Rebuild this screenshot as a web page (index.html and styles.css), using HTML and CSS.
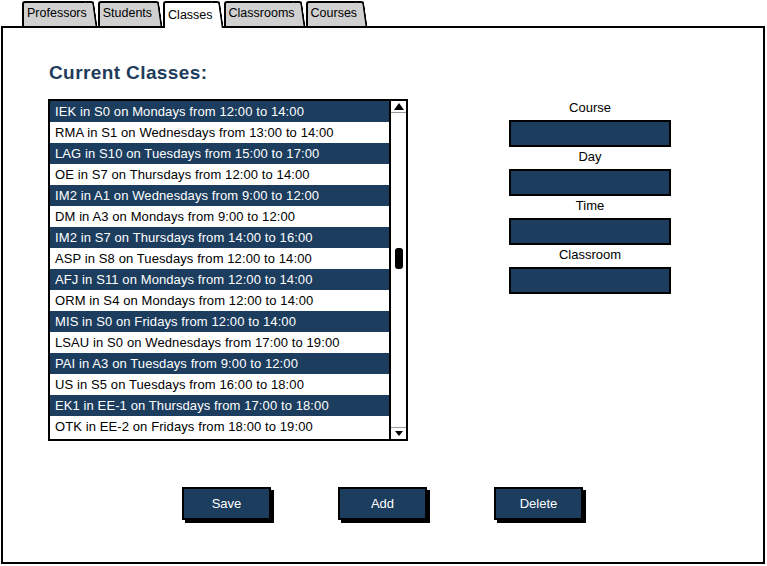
FILE: index.html
```html
<!DOCTYPE html>
<html>
<head>
<meta charset="utf-8">
<link rel="stylesheet" href="styles.css">
</head>
<body>
<div class="tabs">
  <div class="tab">Professors</div>
  <div class="tab">Students</div>
  <div class="tab active">Classes</div>
  <div class="tab">Classrooms</div>
  <div class="tab">Courses</div>
</div>
<div class="panel">
  <h1 class="title">Current Classes:</h1>
  <div class="main">
    <div class="list">
      <ul class="rows">
        <li class="row dark">IEK in S0 on Mondays from 12:00 to 14:00</li>
        <li class="row">RMA in S1 on Wednesdays from 13:00 to 14:00</li>
        <li class="row dark">LAG in S10 on Tuesdays from 15:00 to 17:00</li>
        <li class="row">OE in S7 on Thursdays from 12:00 to 14:00</li>
        <li class="row dark">IM2 in A1 on Wednesdays from 9:00 to 12:00</li>
        <li class="row">DM in A3 on Mondays from 9:00 to 12:00</li>
        <li class="row dark">IM2 in S7 on Thursdays from 14:00 to 16:00</li>
        <li class="row">ASP in S8 on Tuesdays from 12:00 to 14:00</li>
        <li class="row dark">AFJ in S11 on Mondays from 12:00 to 14:00</li>
        <li class="row">ORM in S4 on Mondays from 12:00 to 14:00</li>
        <li class="row dark">MIS in S0 on Fridays from 12:00 to 14:00</li>
        <li class="row">LSAU in S0 on Wednesdays from 17:00 to 19:00</li>
        <li class="row dark">PAI in A3 on Tuesdays from 9:00 to 12:00</li>
        <li class="row">US in S5 on Tuesdays from 16:00 to 18:00</li>
        <li class="row dark">EK1 in EE-1 on Thursdays from 17:00 to 18:00</li>
        <li class="row">OTK in EE-2 on Fridays from 18:00 to 19:00</li>
      </ul>
      <div class="scrollbar">
        <div class="sb-btn sb-up"><span class="tri-up"></span></div>
        <div class="sb-track"><div class="thumb"></div></div>
        <div class="sb-btn sb-down"><span class="tri-down"></span></div>
      </div>
    </div>
    <div class="form">
      <div class="label">Course</div>
      <div class="input"></div>
      <div class="label">Day</div>
      <div class="input"></div>
      <div class="label">Time</div>
      <div class="input"></div>
      <div class="label">Classroom</div>
      <div class="input"></div>
    </div>
  </div>
  <div class="buttons">
    <div class="btn">Save</div>
    <div class="btn">Add</div>
    <div class="btn">Delete</div>
  </div>
</div>
</body>
</html>
```

FILE: styles.css
```css
* { box-sizing: border-box; }
html, body {
  margin: 0;
  padding: 0;
  background: #fff;
}
body {
  width: 767px;
  height: 566px;
  overflow: hidden;
  font-family: "Liberation Sans", Arial, sans-serif;
  font-size: 13px;
  color: #000;
}
.tabs {
  display: flex;
  padding: 1px 0 0 22px;
  height: 26px;
}
.tab {
  position: relative;
  height: 25px;
  line-height: 21px;
  padding: 0 3px 0 3px;
  margin-right: 8px;
  background: #d0d0d0;
  border-top: 2px solid #000;
  border-left: 2px solid #000;
  border-top-left-radius: 3px;
  font-size: 12.5px;
}
.tab::after {
  content: "";
  position: absolute;
  top: -2px;
  bottom: 0;
  right: -4px;
  width: 7px;
  background: inherit;
  border-top: 2px solid #000;
  border-right: 2px solid #000;
  border-top-right-radius: 3px;
  transform: skewX(8deg);
  transform-origin: top left;
}
.tab.active {
  background: #fff;
  z-index: 2;
  height: 27px;
  margin-bottom: -2px;
  line-height: 24px;
}
.panel {
  margin: 0 2px 0 1px;
  height: 538px;
  border: 2px solid #000;
  padding: 34px 0 0 45px;
}
.title {
  margin: 0 0 0 1px;
  height: 37px;
  font-size: 19px;
  line-height: 22px;
  font-weight: bold;
  color: #1e3d5c;
  letter-spacing: 0.4px;
}
.main {
  display: flex;
  align-items: flex-start;
}
.list {
  display: flex;
  width: 360px;
  height: 342px;
  border: 2px solid #000;
}
.rows {
  list-style: none;
  margin: 0;
  padding: 0;
  flex: 1;
}
.row {
  height: 21px;
  line-height: 21px;
  padding-left: 5px;
  white-space: nowrap;
  overflow: hidden;
  letter-spacing: 0.1px;
}
.row.dark {
  background: #1c3d5e;
  color: #fff;
}
.scrollbar {
  width: 17px;
  border-left: 2px solid #000;
  display: flex;
  flex-direction: column;
}
.sb-btn {
  height: 12px;
  display: flex;
  align-items: center;
  justify-content: center;
}
.sb-up { border-bottom: 1px solid #9a9a9a; }
.sb-down { border-top: 1px solid #9a9a9a; }
.tri-up {
  width: 0; height: 0;
  border-left: 5px solid transparent;
  border-right: 5px solid transparent;
  border-bottom: 7px solid #000;
}
.tri-down {
  width: 0; height: 0;
  border-left: 4px solid transparent;
  border-right: 4px solid transparent;
  border-top: 5px solid #000;
}
.sb-track {
  flex: 1;
  display: flex;
  justify-content: center;
}
.thumb {
  margin-top: 135px;
  width: 8px;
  height: 21px;
  background: #000;
  border-radius: 3px;
}
.form {
  margin-left: 101px;
  margin-top: -1px;
  width: 162px;
  display: flex;
  flex-direction: column;
}
.label {
  height: 22px;
  line-height: 20px;
  text-align: center;
}
.input {
  height: 27px;
  background: #1c3d5e;
  border: 2px solid #000;
}
.buttons {
  display: flex;
  gap: 67px;
  margin-top: 46px;
  padding-left: 134px;
}
.btn {
  width: 89px;
  height: 33px;
  line-height: 29px;
  text-align: center;
  color: #fff;
  background: #1c3d5e;
  border: 2px solid #000;
  box-shadow: 3px 3px 0 #000;
}
```
